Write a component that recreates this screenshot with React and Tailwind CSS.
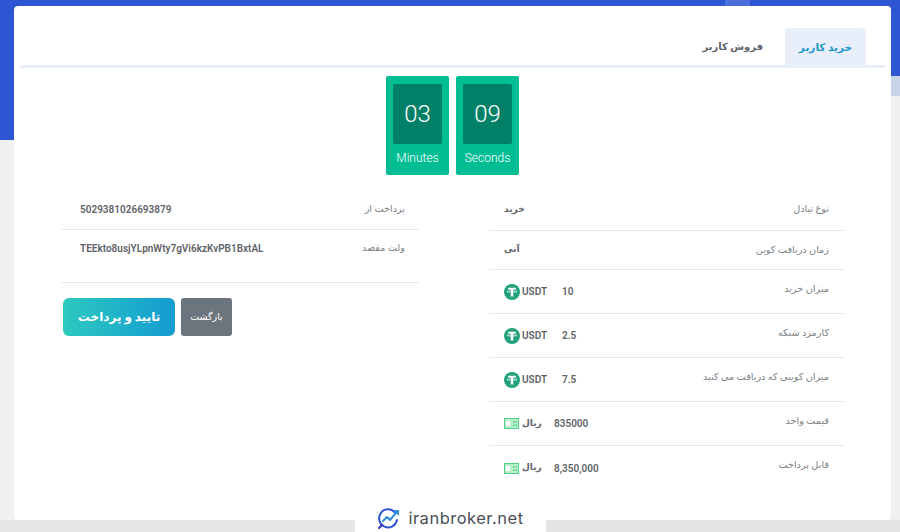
import React from 'react';

const font = { fontFamily: 'Roboto, "Noto Sans", "DejaVu Sans", sans-serif' };

const TetherIcon = () => (
  <svg width="16" height="16" viewBox="0 0 16 16" className="shrink-0">
    <circle cx="8" cy="8" r="8" fill="#26a17b" />
    <path d="M4.200 3.800h7.600v2H9.200v6.700H6.800V5.800H4.200z" fill="#fff" />
    <path d="M3 7.600c2-.8 8-.8 10 0-2 .8-8 .8-10 0z" fill="none" stroke="#fff" strokeWidth="0.6" />
  </svg>
);

const CashIcon = () => (
  <svg width="15" height="11" viewBox="0 0 15 11" className="shrink-0">
    <rect x="0.500" y="0.500" width="14" height="10" fill="#b9efc9" stroke="#4fd08a" />
    <rect x="2" y="3" width="4" height="5" fill="#fff" />
    <rect x="9" y="3" width="1.500" height="1.500" fill="#4fd08a" />
    <rect x="11.500" y="3" width="1.500" height="1.500" fill="#4fd08a" />
    <rect x="9" y="6.500" width="1.500" height="1.500" fill="#4fd08a" />
    <rect x="11.500" y="6.500" width="1.500" height="1.500" fill="#4fd08a" />
  </svg>
);

const Amount = ({ value, unit, rial }) => (
  <div dir="ltr" className="flex items-center">
    {rial ? <CashIcon /> : <TetherIcon />}
    {rial ? (
      <span className="ml-[3px] w-[32px] text-[9px] font-semibold text-[#5f6368]">{unit}</span>
    ) : (
      <span className="ml-[2px] w-[40px] text-[10px] font-semibold text-[#5f6368]">{unit}</span>
    )}
    <span className="text-[10px] font-semibold text-[#5f6368]">{value}</span>
  </div>
);

const rows = [
  { label: 'نوع تبادل', h: 'h-[42px]', value: <span className="text-[9px] font-bold text-[#5f6368]">خرید</span> },
  { label: 'زمان دریافت کوین', h: 'h-[39px]', value: <span className="text-[9px] font-bold text-[#5f6368]">آنی</span> },
  { label: 'میزان خرید', h: 'h-[44px]', value: <Amount value="10" unit="USDT" />, up: true },
  { label: 'کارمزد شبکه', h: 'h-[44px]', value: <Amount value="2.5" unit="USDT" />, up: true },
  { label: 'میزان کوینی که دریافت می کنید', h: 'h-[44px]', value: <Amount value="7.5" unit="USDT" />, up: true },
  { label: 'قیمت واحد', h: 'h-[44px]', value: <Amount value="835000" unit="ریال" rial />, up: true },
  { label: 'قابل پرداخت', h: 'h-[44px]', value: <Amount value="8,350,000" unit="ریال" rial />, up: true, last: true },
];

const TimeBox = ({ value, label }) => (
  <div className="flex h-[99px] w-[63px] flex-col items-center rounded-[2px] bg-[#00bd94] pt-[8px] text-white">
    <div className="flex h-[60px] w-[49px] items-center justify-center rounded-[2px] bg-[#008066] text-[24px] font-light">{value}</div>
    <div className="mt-[5px] text-[12px] font-light">{label}</div>
  </div>
);

export default function App() {
  return (
    <div style={font} className="relative h-[532px] w-[900px] overflow-hidden bg-[#eef0f1]">
      <div className="absolute inset-x-0 top-0 h-[76px] bg-[#2f56d2]" />
      <div className="absolute left-0 top-[76px] h-[64px] w-[14px] bg-[#2f56d2]" />
      <div className="absolute right-0 top-[76px] h-[20px] w-[9px] bg-[#c9d3e8]" />
      <div className="absolute left-0 top-[520px] h-[12px] w-[355px] bg-[#e6e6e6]" />
      <div className="absolute right-0 top-[520px] h-[12px] w-[354px] bg-[#e4e4e4]" />
      <div className="absolute left-[725px] top-0 h-[6px] w-[25px] bg-[#4a6fdc]" />

      <div className="absolute left-[14px] top-[6px] h-[514px] w-[877px] rounded-[4px] bg-white">
        <div dir="rtl" className="ml-[6px] mr-[6px] mt-[22px] flex h-[40px] border-b-[3px] border-[#e9effa] pr-[19px]">
          <div className="flex h-[40px] w-[81px] items-center justify-center rounded-t-[4px] bg-[#e9effa] text-[10.500px] font-bold text-[#1e97c9]">خرید کاربر</div>
          <div className="flex h-[37px] items-center px-[22px] text-[10px] font-bold text-[#5f6368]">فروش کاربر</div>
        </div>

        <div dir="ltr" className="mt-[8px] flex justify-center gap-[7px]">
          <TimeBox value="03" label="Minutes" />
          <TimeBox value="09" label="Seconds" />
        </div>

        <div className="mt-[14px] flex items-start justify-between pl-[48px] pr-[47px]">
          <div className="w-[357px]">
            <div className="flex h-[41px] items-center justify-between border-b border-[#e6e8ea] pl-[18px] pr-[14px]">
              <span className="text-[10px] font-semibold text-[#5f6368]">5029381026693879</span>
              <span dir="rtl" className="text-[9.700px] text-[#7a7f85]">پرداخت از</span>
            </div>
            <div className="flex h-[36px] items-center justify-between pl-[18px] pr-[14px]">
              <span className="text-[10px] font-semibold text-[#5f6368]">TEEkto8usjYLpnWty7gVi6kzKvPB1BxtAL</span>
              <span dir="rtl" className="text-[9.700px] text-[#7a7f85]">ولت مقصد</span>
            </div>
            <div className="mt-[16px] h-px w-[357px] bg-[#e6e8ea]" />
            <div dir="ltr" className="mt-[15px] flex gap-[6px] pl-[1px]">
              <button className="h-[38px] w-[112px] rounded-[6px] bg-gradient-to-r from-[#2ec9bf] to-[#169bd1] text-[12px] font-semibold text-white">تایید و پرداخت</button>
              <button className="h-[38px] w-[51px] rounded-[3px] bg-[#6c757d] text-[9.500px] text-white">بازگشت</button>
            </div>
          </div>

          <div className="w-[355px]">
            {rows.map((row) => (
              <div key={row.label} className={`flex items-center justify-between px-[15px] ${row.h} ${row.last ? '' : 'border-b border-[#e6e8ea]'}`}>
                {row.value}
                <span dir="rtl" className={`text-[9.700px] text-[#7a7f85] ${row.up ? 'mb-[5px]' : ''}`}>{row.label}</span>
              </div>
            ))}
          </div>
        </div>
      </div>

      <div className="absolute bottom-0 left-[355px] flex h-[27px] w-[191px] items-center justify-center gap-[8px] bg-white">
        <svg width="23" height="23" viewBox="0 0 23 23" fill="none">
          <path d="M18 5.500A9 9 0 1 0 20 13" stroke="#2f55d4" strokeWidth="2" strokeLinecap="round" />
          <path d="M6 14l4-4 3 3 6-7" stroke="#2f8fe0" strokeWidth="2" strokeLinecap="round" strokeLinejoin="round" />
          <path d="M16 3h6v6z" fill="#2f8fe0" />
          <path d="M2 21l3-3" stroke="#2f2fb0" strokeWidth="2" strokeLinecap="round" />
        </svg>
        <span className="text-[16.500px] tracking-[0.5px] text-[#4a4f57]" style={{ fontFamily: 'Inter, sans-serif' }}>iranbroker.net</span>
      </div>
    </div>
  );
}
